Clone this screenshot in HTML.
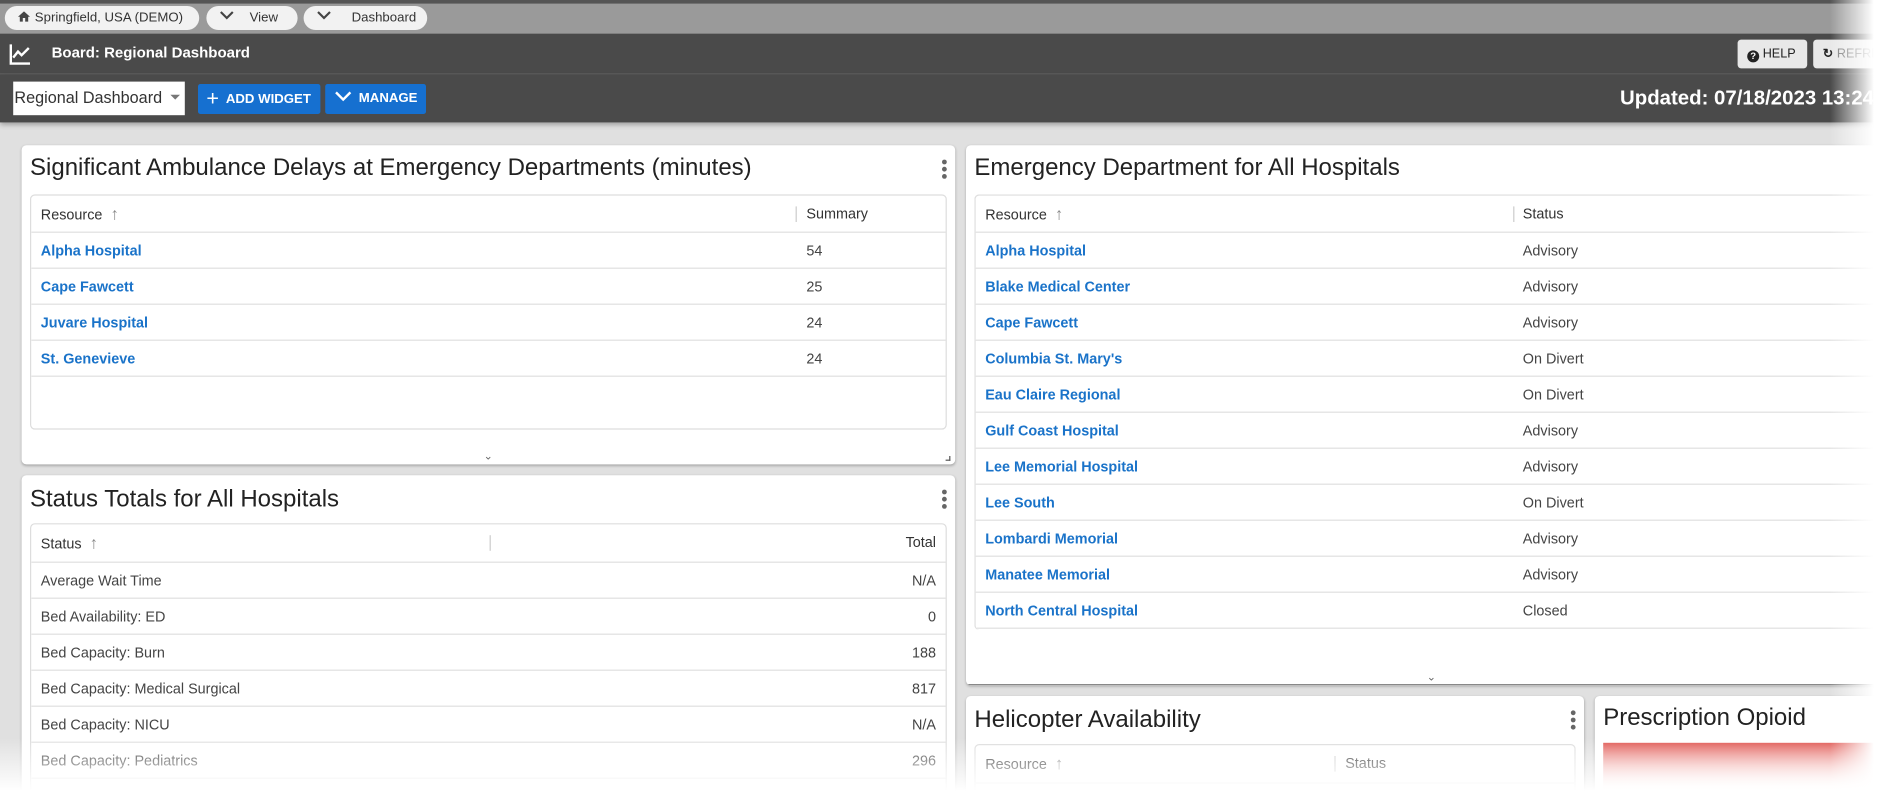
<!DOCTYPE html>
<html><head><meta charset="utf-8"><style>
*{box-sizing:border-box;margin:0;padding:0}
html,body{width:1881px;height:804px;overflow:hidden;background:#fff}
#w{position:absolute;left:0;top:0;width:1568px;height:670px;transform:scale(1.2);transform-origin:0 0;background:#e0e0e0;font-family:"Liberation Sans",Arial,sans-serif;overflow:hidden}
.a{position:absolute}
.pill{position:absolute;top:5px;height:20px;background:#f2f2f2;border-radius:10px;font-size:11px;color:#333;line-height:20px;padding-left:10px}
.panel{position:absolute;background:#fff;border-radius:4px;box-shadow:0 1px 2px rgba(0,0,0,.25);overflow:hidden}
.ttl{position:absolute;left:7px;top:8px;font-size:20px;color:#222;white-space:nowrap}
.dots{position:absolute;width:4px}
.dots i{display:block;width:4px;height:4px;border-radius:2px;background:#666;margin-bottom:2px}
.tbl{position:absolute;border:1px solid #ddd;border-radius:4px;background:#fff;overflow:hidden}
.row{position:absolute;left:0;right:0;height:30px;border-bottom:1px solid #e0e0e0;font-size:12px;line-height:30px;color:#444}
.row span{position:absolute;white-space:nowrap}
.lnk{color:#1a73c9;font-weight:bold}
.hd{color:#333;font-weight:normal}
.ar{position:static!important;color:#888;font-size:14px}
.dv{position:absolute;top:9px;width:1px;height:13px;background:#ccc}
.btn{position:absolute;top:70px;height:25px;background:#1670d0;border-radius:2px;color:#fff;font-size:11px;font-weight:bold;line-height:25px}
</style></head><body><div id="w">
<div class="a" style="left:0;top:0;width:1568px;height:28px;background:#9a9a9a;border-top:3px solid #555"></div>
<div class="pill" style="left:4px;width:162px"><svg width="12" height="12" viewBox="0 0 24 24" style="vertical-align:-2px;margin-right:3px"><path d="M10 20v-6h4v6h5v-8h3L12 3 2 12h3v8z" fill="#444"/></svg>Springfield, USA (DEMO)</div>
<div class="pill" style="left:172px;width:76px"><svg width="14" height="10" viewBox="0 0 14 10" style="margin-right:12px;vertical-align:0"><path d="M2 2l5 5 5-5" stroke="#444" stroke-width="1.8" fill="none"/></svg>View</div>
<div class="pill" style="left:253px;width:103px"><svg width="14" height="10" viewBox="0 0 14 10" style="margin-right:16px;vertical-align:0"><path d="M2 2l5 5 5-5" stroke="#444" stroke-width="1.8" fill="none"/></svg>Dashboard</div>
<div class="a" style="left:0;top:28px;width:1568px;height:34px;background:#4a4a4a;border-bottom:1px solid #5e5e5e"></div>
<svg class="a" style="left:7px;top:35px" width="20" height="20" viewBox="0 0 20 20"><path d="M2 2v16h16" stroke="#fff" stroke-width="2" fill="none"/><path d="M4 13l4-5 3 3 6-6" stroke="#fff" stroke-width="2" fill="none"/></svg>
<div class="a" style="left:43px;top:37px;color:#fff;font-weight:bold;font-size:12.5px">Board: Regional Dashboard</div>
<div class="a" style="left:1448px;top:33px;width:58px;height:24px;background:#e8e8e8;border-radius:3px;font-size:10.5px;line-height:24px;color:#222;padding-left:8px"><span style="display:inline-block;width:10px;height:10px;border-radius:5px;background:#222;color:#fff;font-size:8px;line-height:10px;text-align:center;vertical-align:-1px;font-weight:bold">?</span> HELP</div>
<div class="a" style="left:1511px;top:33px;width:70px;height:24px;background:#e8e8e8;border-radius:3px;font-size:10.5px;line-height:24px;color:#777;padding-left:8px"><b style="color:#222">&#x21bb;</b> REFRESH</div>
<div class="a" style="left:0;top:62px;width:1568px;height:40px;background:#4a4a4a;box-shadow:0 2px 4px rgba(0,0,0,.3)"></div>
<div class="a" style="left:11px;top:68px;width:143px;height:28px;background:#fff;font-size:13.5px;line-height:28px;color:#333;padding-left:1px">Regional Dashboard <span style="display:inline-block;border-left:4px solid transparent;border-right:4px solid transparent;border-top:4px solid #777;vertical-align:3px;margin-left:3px"></span></div>
<div class="btn" style="left:165px;width:102px;padding-left:7px"><span style="font-size:18px;font-weight:normal;vertical-align:-2px">+</span>&nbsp; ADD WIDGET</div>
<div class="btn" style="left:271px;width:84px;padding-left:8px"><svg width="14" height="9" viewBox="0 0 14 9" style="margin-right:6px"><path d="M1 1l6 6 6-6" stroke="#fff" stroke-width="2" fill="none"/></svg>MANAGE</div>
<div class="a" style="left:1350px;top:72px;color:#fff;font-weight:bold;font-size:17px;white-space:nowrap">Updated: 07/18/2023 13:24 CDT</div>

<div class="panel" style="left:18px;top:121px;width:778px;height:266px">
 <div class="ttl">Significant Ambulance Delays at Emergency Departments (minutes)</div>
 <div class="dots" style="left:767px;top:12px"><i></i><i></i><i></i></div>
 <div class="tbl" style="left:7px;top:41px;width:764px;height:196px">
  <div class="row" style="top:0;height:31px"><span class="hd" style="left:8px">Resource &nbsp;<span class="ar">&#x2191;</span></span><div class="dv" style="left:637px"></div><span class="hd" style="left:646px">Summary</span></div>
  <div class="row" style="top:31px"><span class="lnk" style="left:8px">Alpha Hospital</span><span style="left:646px">54</span></div>
  <div class="row" style="top:61px"><span class="lnk" style="left:8px">Cape Fawcett</span><span style="left:646px">25</span></div>
  <div class="row" style="top:91px"><span class="lnk" style="left:8px">Juvare Hospital</span><span style="left:646px">24</span></div>
  <div class="row" style="top:121px"><span class="lnk" style="left:8px">St. Genevieve</span><span style="left:646px">24</span></div>
 </div>
 <div class="a" style="left:385px;top:254px;font-size:9px;color:#666">&#x2304;</div>
 <div class="a" style="left:770px;top:259px;width:4px;height:4px;border-right:1px solid #555;border-bottom:1px solid #555"></div>
</div>

<div class="panel" style="left:18px;top:396px;width:778px;height:274px">
 <div class="ttl" style="top:9px">Status Totals for All Hospitals</div>
 <div class="dots" style="left:767px;top:12px"><i></i><i></i><i></i></div>
 <div class="tbl" style="left:7px;top:40px;width:764px;height:240px">
  <div class="row" style="top:0;height:32px"><span class="hd" style="left:8px">Status &nbsp;<span class="ar">&#x2191;</span></span><div class="dv" style="left:382px"></div><span class="hd" style="right:8px">Total</span></div>
  <div class="row" style="top:32px"><span style="left:8px">Average Wait Time</span><span style="right:8px">N/A</span></div>
  <div class="row" style="top:62px"><span style="left:8px">Bed Availability: ED</span><span style="right:8px">0</span></div>
  <div class="row" style="top:92px"><span style="left:8px">Bed Capacity: Burn</span><span style="right:8px">188</span></div>
  <div class="row" style="top:122px"><span style="left:8px">Bed Capacity: Medical Surgical</span><span style="right:8px">817</span></div>
  <div class="row" style="top:152px"><span style="left:8px">Bed Capacity: NICU</span><span style="right:8px">N/A</span></div>
  <div class="row" style="top:182px"><span style="left:8px">Bed Capacity: Pediatrics</span><span style="right:8px">296</span></div>
 </div>
</div>

<div class="panel" style="left:805px;top:121px;width:763px;height:450px">
 <div class="ttl">Emergency Department for All Hospitals</div>
 <div class="tbl" style="left:7px;top:41px;width:780px;height:363px;border-bottom:none">
  <div class="row" style="top:0;height:31px"><span class="hd" style="left:8px">Resource &nbsp;<span class="ar">&#x2191;</span></span><div class="dv" style="left:448px"></div><span class="hd" style="left:456px">Status</span></div>
  <div class="row" style="top:31px"><span class="lnk" style="left:8px">Alpha Hospital</span><span style="left:456px">Advisory</span></div>
  <div class="row" style="top:61px"><span class="lnk" style="left:8px">Blake Medical Center</span><span style="left:456px">Advisory</span></div>
  <div class="row" style="top:91px"><span class="lnk" style="left:8px">Cape Fawcett</span><span style="left:456px">Advisory</span></div>
  <div class="row" style="top:121px"><span class="lnk" style="left:8px">Columbia St. Mary's</span><span style="left:456px">On Divert</span></div>
  <div class="row" style="top:151px"><span class="lnk" style="left:8px">Eau Claire Regional</span><span style="left:456px">On Divert</span></div>
  <div class="row" style="top:181px"><span class="lnk" style="left:8px">Gulf Coast Hospital</span><span style="left:456px">Advisory</span></div>
  <div class="row" style="top:211px"><span class="lnk" style="left:8px">Lee Memorial Hospital</span><span style="left:456px">Advisory</span></div>
  <div class="row" style="top:241px"><span class="lnk" style="left:8px">Lee South</span><span style="left:456px">On Divert</span></div>
  <div class="row" style="top:271px"><span class="lnk" style="left:8px">Lombardi Memorial</span><span style="left:456px">Advisory</span></div>
  <div class="row" style="top:301px"><span class="lnk" style="left:8px">Manatee Memorial</span><span style="left:456px">Advisory</span></div>
  <div class="row" style="top:331px"><span class="lnk" style="left:8px">North Central Hospital</span><span style="left:456px">Closed</span></div>
 </div>
 <div class="a" style="left:384px;top:438px;font-size:9px;color:#666">&#x2304;</div>
 <div class="a" style="left:0;top:449px;width:780px;height:1px;background:#888"></div>
</div>

<div class="panel" style="left:805px;top:580px;width:515px;height:90px">
 <div class="ttl" style="top:9px">Helicopter Availability</div>
 <div class="dots" style="left:504px;top:12px"><i></i><i></i><i></i></div>
 <div class="tbl" style="left:7px;top:40px;width:501px;height:60px">
  <div class="row" style="top:0;height:32px"><span class="hd" style="left:8px">Resource &nbsp;<span class="ar">&#x2191;</span></span><div class="dv" style="left:299px"></div><span class="hd" style="left:308px">Status</span></div>
 </div>
</div>

<div class="panel" style="left:1329px;top:580px;width:239px;height:90px">
 <div class="ttl" style="top:7px;font-size:20px">Prescription Opioid</div>
 <div class="a" style="left:7px;top:39px;width:240px;height:51px;background:linear-gradient(#e05a55,#f3b3b0 40%,#fff 80%)"></div>
</div>

<div class="a" style="left:1525px;top:0;width:43px;height:670px;background:linear-gradient(90deg,rgba(255,255,255,0),#fff 85%)"></div>
<div class="a" style="left:0;top:615px;width:1568px;height:55px;background:linear-gradient(rgba(255,255,255,0),#fff 80%)"></div>
</div></body></html>
